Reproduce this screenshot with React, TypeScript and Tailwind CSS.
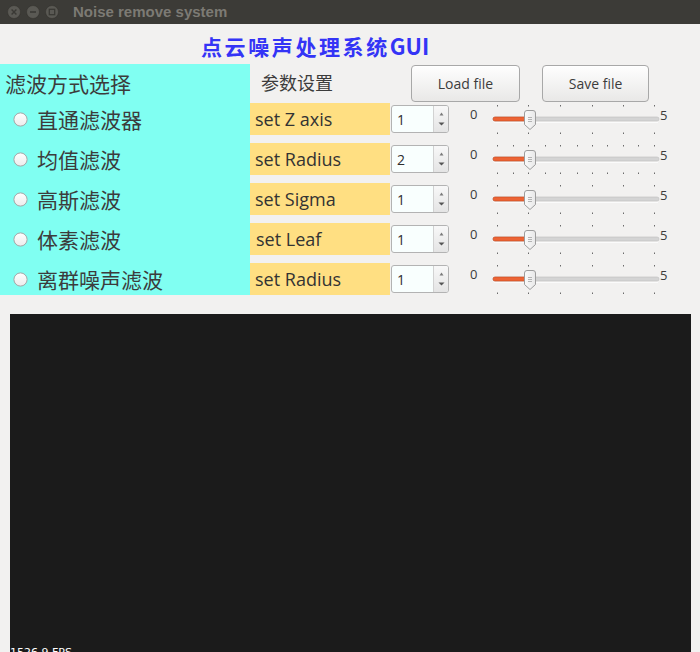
import React from 'react';

const cjk = { fontFamily: '"Noto Sans CJK SC", "Noto Sans", sans-serif' };
const ui = { fontFamily: '"Open Sans", "Noto Sans", sans-serif' };

const filters = ['直通滤波器', '均值滤波', '高斯滤波', '体素滤波', '离群噪声滤波'];
const params = [
  { label: 'set Z axis', value: '1', dense: false },
  { label: 'set Radius', value: '2', dense: true },
  { label: 'set Sigma', value: '1', dense: false },
  { label: 'set Leaf', value: '1', dense: false },
  { label: 'set Radius', value: '1', dense: false },
];

function WinButton({ kind }: { kind: 'close' | 'min' | 'max' }) {
  return (
    <svg width="14" height="14" viewBox="0 0 14 14">
      <circle cx="7" cy="7" r="6.5" fill="#5a5954" stroke="#34332f" strokeWidth="0.6" />
      {kind === 'close' && <path d="M4.6 4.6 L9.4 9.4 M9.4 4.6 L4.6 9.4" stroke="#3a3935" strokeWidth="1.4" />}
      {kind === 'min' && <path d="M4 7 H10" stroke="#3a3935" strokeWidth="1.6" />}
      {kind === 'max' && <rect x="4.3" y="4.3" width="5.4" height="5.4" fill="none" stroke="#3a3935" strokeWidth="1.3" />}
    </svg>
  );
}

function Radio() {
  return (
    <svg width="15" height="15" viewBox="0 0 15 15" className="shrink-0">
      <defs>
        <linearGradient id="rg" x1="0" y1="0" x2="0" y2="1">
          <stop offset="0" stopColor="#ffffff" />
          <stop offset="1" stopColor="#ececec" />
        </linearGradient>
      </defs>
      <circle cx="7.5" cy="7.5" r="6.6" fill="url(#rg)" stroke="#a6a6a6" strokeWidth="1" />
    </svg>
  );
}

function SpinBox({ value }: { value: string }) {
  return (
    <div className="ml-[1px] mt-[2px] flex h-[28px] w-[58px] overflow-hidden rounded-[3px] border border-[#b3b3b3] bg-[#f9fffe]">
      <div className="flex flex-1 items-center pl-[5px] text-[14px] text-[#2e2e2e]" style={ui}>
        {value}
      </div>
      <div className="flex w-[15px] flex-col items-center justify-between border-l border-[#d2d2d2] bg-gradient-to-b from-[#f8f8f8] to-[#e4e4e4] py-[6px]">
        <svg width="5" height="4" viewBox="0 0 5 4">
          <path d="M2.5 0.5 L4.5 3.5 H0.5 Z" fill="#7a7a7a" />
        </svg>
        <svg width="7" height="4" viewBox="0 0 7 4">
          <path d="M0.5 0.5 H6.5 L3.5 3.5 Z" fill="#555" />
        </svg>
      </div>
    </div>
  );
}

function Slider({ dense }: { dense: boolean }) {
  const main = [17, 48, 80, 112, 143, 174];
  const half = [33, 65, 97, 127, 158];
  const ticks = dense ? [...main, ...half] : main;
  return (
    <svg width="180" height="32" viewBox="0 0 180 32" className="shrink-0">
      {ticks.map((x) => (
        <g key={x}>
          <rect x={x} y="2" width="1" height="1.5" fill="#6a6a6a" />
          <rect x={x} y="29.5" width="1" height="1.5" fill="#6a6a6a" />
        </g>
      ))}
      <rect x="13" y="14" width="166" height="4" rx="2" fill="#d4d4d4" stroke="#bdbdbd" strokeWidth="0.6" />
      <line x1="14" y1="19.4" x2="178" y2="19.4" stroke="#ffffff" strokeWidth="0.8" />
      <rect x="13" y="14" width="36" height="4" rx="2" fill="#ec6435" stroke="#c9471c" strokeWidth="0.6" />
      <defs>
        <linearGradient id="hg" x1="0" y1="0" x2="1" y2="0">
          <stop offset="0" stopColor="#fbfbfb" />
          <stop offset="1" stopColor="#e8e8e8" />
        </linearGradient>
      </defs>
      <path
        d="M44.5 10 Q44.5 7.5 47 7.5 H53 Q55.5 7.5 55.5 10 V21.5 L50 26.5 L44.5 21.5 Z"
        fill="url(#hg)"
        stroke="#9d9d9d"
        strokeWidth="1"
      />
      <path d="M48 14.5 H52 M48 16.5 H52 M48 18.5 H52" stroke="#a5a5a5" strokeWidth="0.8" />
    </svg>
  );
}

function Button({ label, w }: { label: string; w: string }) {
  return (
    <div
      className={`flex h-[37px] ${w} items-center justify-center rounded-[4px] border border-[#a8a8a8] bg-gradient-to-b from-[#fefefe] to-[#e9e8e7] text-[14px] text-[#3c3c3c] shadow-[inset_0_1px_0_#ffffff]`}
      style={ui}
    >
      {label}
    </div>
  );
}

export default function App() {
  return (
    <div className="flex h-[652px] w-[700px] flex-col overflow-hidden bg-[#f2f1f0]">
      {/* window title bar */}
      <div className="flex h-[24px] shrink-0 items-center bg-[#3c3b37]">
        <div className="ml-[7px] flex gap-[5px]">
          <WinButton kind="close" />
          <WinButton kind="min" />
          <WinButton kind="max" />
        </div>
        <span
          className="ml-[14px] text-[15px] font-bold text-[#7c7a74]"
          style={{ fontFamily: '"Liberation Sans", Arial, sans-serif' }}
        >
          Noise remove system
        </span>
      </div>

      {/* heading */}
      <div className="flex h-[40px] shrink-0 items-center pl-[201px] pt-[3px]">
        <span className="text-[21px] font-bold leading-none text-[#3434f6]" style={cjk}>
          <span className="tracking-[2.6px]">点云噪声处理系统</span>
          <span className="text-[22px]">GUI</span>
        </span>
      </div>

      {/* controls */}
      <div className="flex shrink-0">
        <div className="flex w-[250px] flex-col bg-[#80fff2]">
          <div className="flex h-[39px] items-center pl-[5px] pt-[1px] text-[21px] text-[#3c3c3c]" style={cjk}>
            滤波方式选择
          </div>
          <div className="flex flex-col gap-[8px]">
            {filters.map((f) => (
              <div key={f} className="flex h-[32px] items-center pl-[13px] pt-[1px]">
                <Radio />
                <span className="ml-[9px] text-[21px] leading-none text-[#3c3c3c]" style={cjk}>
                  {f}
                </span>
              </div>
            ))}
          </div>
        </div>

        <div className="flex flex-col">
          <div className="flex h-[39px] items-start">
            <div className="flex h-[39px] w-[161px] items-center pl-[11px] pb-[3px] text-[18px] text-[#3c3c3c]" style={cjk}>
              参数设置
            </div>
            <div className="mt-[1px] flex gap-[22px]">
              <Button label="Load file" w="w-[109px]" />
              <Button label="Save file" w="w-[107px]" />
            </div>
          </div>
          <div className="flex flex-col gap-[8px]">
            {params.map((p, i) => (
              <div key={i} className="flex h-[32px] items-start">
                <div
                  className={`flex h-[32px] w-[140px] items-center ${p.label === 'set Leaf' ? 'pl-[6px]' : 'pl-[5px]'} bg-[#ffdf82] text-[18px] text-[#333]`}
                  style={ui}
                >
                  {p.label}
                </div>
                <SpinBox value={p.value} />
                <span className="ml-[21px] mt-[5px] w-[10px] text-[13px] leading-[13px] text-[#3c3c3c]" style={ui}>
                  0
                </span>
                <Slider dense={p.dense} />
                <span className="mt-[6px] text-[13px] leading-[13px] text-[#3c3c3c]" style={ui}>
                  5
                </span>
              </div>
            ))}
          </div>
        </div>
      </div>

      {/* render view */}
      <div className="ml-[10px] mt-[19px] h-[345px] w-[681px] shrink-0 bg-[#1b1b1b] pt-[324px]">
        <span className="text-[11px] leading-[13px] text-white" style={{ fontFamily: '"DejaVu Sans", sans-serif' }}>
          1526.9 FPS
        </span>
      </div>
    </div>
  );
}
